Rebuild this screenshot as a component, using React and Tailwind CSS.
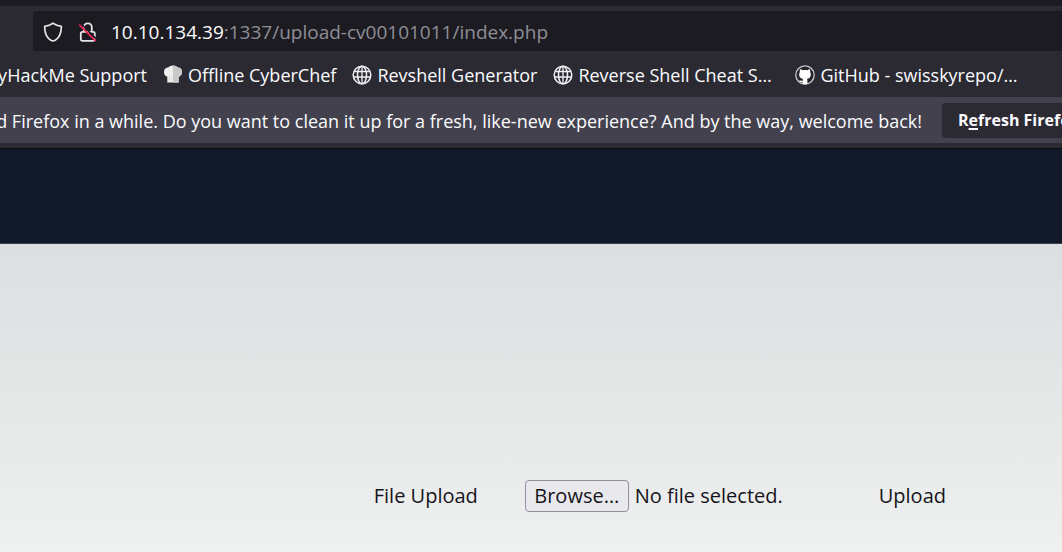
import { useRef, useState } from "react";

function ShieldIcon() {
  return (
    <svg className="size-5 shrink-0" viewBox="0 0 20 20" fill="none" stroke="#e4e3e8" strokeWidth="1.7" strokeLinejoin="round" aria-hidden="true">
      <path d="M10 1.2c2.4 1.6 5 2.6 8.3 3.1.2 6.4-1.7 11.2-6.5 14.1-1.1.7-2.5.7-3.6 0C3.4 15.5 1.5 10.7 1.7 4.300 5 3.800 7.600 2.800 10 1.200z" />
    </svg>
  );
}

function InsecureLockIcon() {
  return (
    <svg className="size-5 shrink-0" viewBox="0 0 20 20" fill="none" aria-hidden="true">
      <rect x="2.800" y="9.800" width="14" height="9" rx="1.800" stroke="#e4e3e8" strokeWidth="1.800" />
      <path d="M5.800 9.500V5.300a4 4 0 0 1 8 0v4.200" stroke="#e4e3e8" strokeWidth="1.800" />
      <path d="M2.600 1.200 19 17.600" stroke="#1c1b22" strokeWidth="1.500" />
      <path d="M1.200 2.600 17.800 19.200" stroke="#e22850" strokeWidth="1.900" />
    </svg>
  );
}

function ChefHatIcon() {
  return (
    <svg className="size-5 shrink-0" viewBox="0 0 20 20" aria-hidden="true">
      <path d="M4.300 17.500V11.600C2.300 11.200 1 9.300 1 6.900c0-2.500 1.800-4.400 4.200-4.300C6.200 1.400 7.900.6 10 .6s3.800.8 4.800 2c2.400-.1 4.200 1.800 4.200 4.300 0 2.400-1.300 4.300-3.300 4.700v5.900z" fill="#eeeeee" />
      <path d="M10 .6c2.100 0 3.800.8 4.800 2 2.400-.1 4.200 1.800 4.200 4.300 0 2.400-1.300 4.300-3.300 4.700v5.900H10z" fill="#c9c9c9" />
      <path d="M6.200 11.500v4M8.500 12v3.500" stroke="#d4d4d4" strokeWidth=".8" />
    </svg>
  );
}

function GlobeIcon() {
  return (
    <svg className="size-5 shrink-0" viewBox="0 0 20 20" fill="none" stroke="#f0f0f4" strokeWidth="1.500" aria-hidden="true">
      <circle cx="10" cy="10" r="8.800" />
      <ellipse cx="10" cy="10" rx="4.500" ry="8.800" />
      <path d="M2.300 6.500h15.400M1.300 12h17.400M10 1.300v17.400" strokeWidth="1.300" />
    </svg>
  );
}

function GitHubIcon() {
  return (
    <svg className="size-5 shrink-0" viewBox="0 0 20 20" aria-hidden="true">
      <circle cx="10" cy="10" r="9.200" fill="#24242a" stroke="#c8c8cc" strokeWidth="1.300" />
      <path d="M5 4.300c1.200 0 2 .4 2.800 1 1.400-.3 3-.3 4.400 0 .8-.6 1.600-1 2.800-1 .4 1 .4 1.900.1 2.700 1.500 2.600.7 6.300-3.100 6.900.3.500.4 1 .4 1.700v3.300c-1.600.5-3.200.5-4.800 0v-1.700c-2 .3-2.700-.6-3.300-1.800.9-.2 1.500.8 3.300.5 0-.8.100-1.500.4-2-3.800-.6-4.600-4.300-3.100-6.900-.3-.8-.3-1.700.1-2.700z" fill="#ffffff" />
    </svg>
  );
}

function Bookmark({ icon, className = "", children }) {
  return (
    <a href="#" className={`flex shrink-0 items-center gap-[5px] ${className}`}>
      {icon}
      <span>{children}</span>
    </a>
  );
}

function UploadForm() {
  const fileInput = useRef(null);
  const [fileName, setFileName] = useState("No file selected.");

  return (
    <form className="flex items-center pt-[236px] pr-[116px] text-xl leading-6 text-[#15141a]" onSubmit={(e) => e.preventDefault()}>
      <label htmlFor="cv" className="ml-auto w-[151px] shrink-0">File Upload</label>
      <input
        id="cv"
        ref={fileInput}
        type="file"
        className="sr-only"
        onChange={(e) => setFileName(e.target.files[0]?.name ?? "No file selected.")}
      />
      <button
        type="button"
        onClick={() => fileInput.current.click()}
        className="h-8 w-[104px] shrink-0 rounded border border-[#8f8f9d] bg-[#e9e9ed] whitespace-nowrap"
      >
        Browse…
      </button>
      <span className="ml-1.5 w-[244px] shrink-0">{fileName}</span>
      <button type="submit" className="shrink-0">Upload</button>
    </form>
  );
}

export default function App() {
  return (
    <div className="flex min-h-screen flex-col overflow-hidden bg-[#2b2a33] font-['Open_Sans',sans-serif] text-lg leading-6 text-[#fbfbfe]">
      <header>
        <div className="h-1.5 bg-[#1c1b22]" />
        <div className="pt-[5px] pl-[33px]">
          <div className="flex h-10 items-center gap-[15px] rounded-l bg-[#1c1b22] pt-0.5 pl-2.5">
            <ShieldIcon />
            <InsecureLockIcon />
            <input
              aria-label="Address"
              className="sr-only"
              readOnly
              value="10.10.134.39:1337/upload-cv00101011/index.php"
            />
            <span className="-ml-0.5 text-[19px] whitespace-nowrap text-[#8f8f96]">
              <span className="text-[#fbfbfe]">10.10.134.39</span>:1337/upload-cv00101011/index.php
            </span>
          </div>
        </div>
        <nav className="flex h-[46px] items-center gap-4 pt-0.5 whitespace-nowrap">
          <a href="#" className="flex w-[147px] shrink-0 justify-end overflow-hidden">yHackMe Support</a>
          <Bookmark icon={<ChefHatIcon />}>Offline CyberChef</Bookmark>
          <Bookmark icon={<GlobeIcon />}>Revshell Generator</Bookmark>
          <Bookmark icon={<GlobeIcon />} className="w-[226px]">Reverse Shell Cheat S…</Bookmark>
          <Bookmark icon={<GitHubIcon />} className="w-[226px]">GitHub - swisskyrepo/…</Bookmark>
        </nav>
        <div className="flex h-[46px] items-center gap-5 overflow-hidden bg-[#42414d] whitespace-nowrap">
          <p className="flex w-[922px] shrink-0 justify-end overflow-hidden pt-0.5">
            ed Firefox in a while. Do you want to clean it up for a fresh, like-new experience? And by the way, welcome back!
          </p>
          <button type="button" className="h-[35px] shrink-0 rounded bg-[#2b2a33] px-4 text-base font-bold">
            R<span className="underline decoration-2 underline-offset-2">e</span>fresh Firefox…
          </button>
        </div>
        <div className="h-1.5 border-b border-[#0c0c0d] bg-[#2b2a33]" />
      </header>
      <div className="h-[95px] border-b border-[#374151] bg-[#111827]" />
      <main className="flex-1 bg-linear-to-b from-[#dbdfdf] to-[#eff0f0]">
        <UploadForm />
      </main>
    </div>
  );
}
